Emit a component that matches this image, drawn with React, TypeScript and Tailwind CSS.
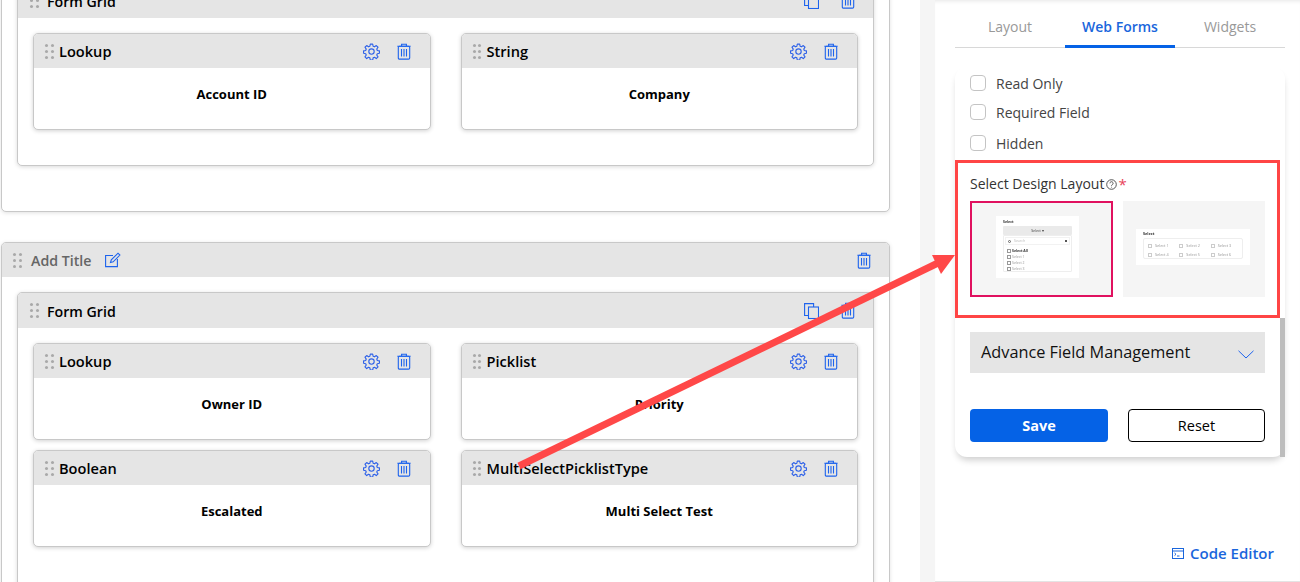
const Grip = () => (
  <span className="grid grid-cols-2 gap-x-[3px] gap-y-[3px] w-[8px] shrink-0">
    {[0, 1, 2, 3, 4, 5].map((i) => (
      <span key={i} className="w-[3px] h-[3px] rounded-full bg-[#a9a9a9]" />
    ))}
  </span>
);

const TrashIcon = () => (
  <svg width="14" height="17" viewBox="0 0 14 17" fill="none" stroke="#1d63ed" strokeWidth="1.1" className="shrink-0">
    <path d="M0.3 3.2h13.4" />
    <path d="M4.6 3V1.2h4.8V3" />
    <rect x="1.3" y="3.2" width="11.4" height="12.9" rx="1.2" />
    <path d="M4.5 6v7.6M7 6v7.6M9.5 6v7.6" />
  </svg>
);

const GearIcon = () => (
  <svg width="17" height="17" viewBox="0 0 24 24" fill="none" stroke="#2f62e8" strokeWidth="1.6" strokeLinejoin="round" className="shrink-0">
    <path d="M10.3 1.5h3.4l.6 3.1 1.9.8 2.6-1.8 2.4 2.4-1.8 2.6.8 1.9 3 .6v3.4l-3 .6-.8 1.9 1.8 2.6-2.4 2.4-2.6-1.8-1.9.8-.6 3h-3.4l-.6-3-1.9-.8-2.6 1.8-2.4-2.4 1.8-2.6-.8-1.9-3-.6v-3.4l3-.6.8-1.9-1.8-2.6 2.4-2.4 2.6 1.8 1.9-.8z" />
    <circle cx="12" cy="12" r="3.8" />
  </svg>
);

const CopyIcon = () => (
  <svg width="15" height="16" viewBox="0 0 15 16" fill="none" stroke="#1d63ed" strokeWidth="1.1" className="shrink-0">
    <path d="M4 12.5H0.6V0.6H9.6V4" />
    <rect x="4.5" y="4" width="10" height="11.5" />
  </svg>
);

const EditIcon = () => (
  <svg width="16" height="16" viewBox="0 0 16 16" fill="none" stroke="#1d63ed" strokeWidth="1.1" className="ml-[14px] shrink-0">
    <path d="M8 3.5H0.6V14.6H12.4V7" />
    <path d="M5.5 10.5l0.8-2.6L13 1.2l1.9 1.9-6.7 6.7z" />
  </svg>
);

const FieldCard = ({ type, label }: { type: string; label: string }) => (
  <div className="h-[97px] rounded-[5px] border border-[#c8c8c8] bg-white shadow-[0_1px_4px_rgba(0,0,0,0.18)] overflow-hidden">
    <div className="h-[34px] bg-[#e5e5e5] flex items-center pl-[11px] pr-[19px]">
      <Grip />
      <span className="ml-[6px] text-[14.6px] font-semibold text-black leading-none">{type}</span>
      <span className="ml-auto flex items-center gap-[17px]">
        <GearIcon />
        <TrashIcon />
      </span>
    </div>
    <div className="pt-[17px] text-center text-[13px] font-bold leading-[19px] text-black">{label}</div>
  </div>
);

const FormGrid = ({ children, height }: { children: React.ReactNode; height: string }) => (
  <div className={`${height} mx-[15px] rounded-[5px] border border-[#c8c8c8] bg-white shadow-[0_1px_4px_rgba(0,0,0,0.15)] overflow-hidden`}>
    <div className="h-[35px] bg-[#e5e5e5] flex items-center pl-[12px] pr-[18px]">
      <Grip />
      <span className="ml-[9px] pt-[3px] text-[14.2px] font-semibold text-black leading-none">Form Grid</span>
      <span className="ml-auto flex items-center gap-[22px]">
        <CopyIcon />
        <TrashIcon />
      </span>
    </div>
    <div className="grid grid-cols-2 gap-x-[30px] gap-y-[10px] pt-[15px] pl-[15px] pr-[15px]">{children}</div>
  </div>
);

const OuterCard = ({ children, height, marginTop }: { children: React.ReactNode; height: string; marginTop: string }) => (
  <div className={`${height} ${marginTop} ml-px w-[889px] rounded-[5px] border border-[#c8c8c8] bg-white shadow-[0_1px_4px_rgba(0,0,0,0.12)] overflow-hidden`}>
    <div className="h-[34px] bg-[#e5e5e5] flex items-center pl-[11px] pr-[18px]">
      <Grip />
      <span className="ml-[10px] pt-[2px] text-[14.2px] font-semibold text-[#666] leading-none">Add Title</span>
      <EditIcon />
      <span className="ml-auto">
        <TrashIcon />
      </span>
    </div>
    <div className="pt-[15px]">{children}</div>
  </div>
);

const Check = ({ label, className }: { label: string; className: string }) => (
  <label className={`flex items-center gap-[10px] text-[14px] leading-none text-[#444] ${className}`}>
    <span className="w-[16px] h-[16px] -mt-[2px] rounded-[4px] border border-[#c4c4c4] bg-white" />
    {label}
  </label>
);

const ThumbA = () => (
  <div className="w-[143px] h-[96px] bg-[#f5f5f5] border-2 border-[#e0115f] pl-[24px] pt-[13px]">
    <div className="w-[83px] h-[62px] bg-white px-[7px] pt-[4px] blur-[0.5px] text-[3.5px] leading-none text-[#999]">
      <div className="font-bold text-[#333]">Select</div>
      <div className="mt-[2.5px] h-[9px] rounded-[1px] bg-[#eaeaea] text-center leading-[9px] text-[#444]">Select ▾</div>
      <div className="h-[37px] rounded-[1px] border border-[#eee] px-[1px]">
        <div className="h-[8px] mt-[1px] flex items-center px-[2px] text-[#bbb] border border-[#f2f2f2]">
          <span className="w-[3px] h-[3px] rounded-full border-[0.7px] border-[#666] mr-[3px]" />
          Search
          <span className="ml-auto w-[2px] h-[2px] bg-[#555]" />
        </div>
        <div className="mt-[4px] ml-[2px] flex flex-col gap-[2.5px]">
          {['Select All', 'Select 1', 'Select 2', 'Select 3'].map((s, i) => (
            <div key={s} className={`flex items-center gap-[1px] ${i === 0 ? 'text-[#333] font-bold' : ''}`}>
              <span className="w-[4px] h-[3.5px] border-[0.5px] border-[#999]" />
              {s}
            </div>
          ))}
        </div>
      </div>
    </div>
  </div>
);

const ThumbB = () => (
  <div className="w-[142px] h-[96px] bg-[#f5f5f5] pl-[13px] pt-[28px]">
    <div className="w-[114px] h-[36px] bg-white px-[7px] pt-[3px] blur-[0.5px] text-[3.8px] leading-none text-[#999]">
      <div className="font-bold text-[#333]">Select</div>
      <div className="mt-[2px] h-[21px] rounded-[2px] border border-[#eee] pl-[4px] pt-[4px] grid grid-cols-3 gap-y-[3.2px]">
        {['Select 1', 'Select 2', 'Select 3', 'Select 4', 'Select 5', 'Select 6'].map((s) => (
          <div key={s} className="flex items-center gap-[3px]">
            <span className="w-[4px] h-[3.5px] border-[0.5px] border-[#ccc]" />
            {s}
          </div>
        ))}
      </div>
    </div>
  </div>
);

const SidePanel = () => (
  <div className="w-[365px] h-[582px] bg-white border-b border-[#e4e4e4] shadow-[inset_0_4px_4px_-3px_rgba(0,0,0,0.1)] pl-[20px] pr-[15px] flex flex-col">
    <div className="h-[48px] border-b border-[#d8d8d8] flex items-end text-[14px]">
      <span className="w-[110px] h-[48px] flex items-center justify-center pt-[6px] text-[#999]">Layout</span>
      <span className="w-[110px] h-[48px] flex items-center justify-center pt-[8px] font-semibold text-[#1a66dc] border-b-[3px] border-[#0562e6] -mb-px">
        Web Forms
      </span>
      <span className="w-[110px] h-[48px] flex items-center justify-center pt-[6px] text-[#999]">Widgets</span>
    </div>
    <div className="mt-[19px] h-[390px] rounded-[12px] bg-white shadow-[0_5px_7px_-2px_rgba(0,0,0,0.2)] flex flex-col relative">
      <div className="pl-[15px] pt-[9px]">
        <Check label="Read Only" className="h-[15px]" />
        <Check label="Required Field" className="h-[15px] mt-[14px]" />
        <Check label="Hidden" className="h-[15px] mt-[16px]" />
      </div>
      <div className="mt-[9px] w-[325px] h-[158px] border-[3px] border-[#ff4545] pl-[12px] pt-[12px]">
        <div className="flex items-center text-[14px] leading-[18px] text-[#333]">
          Select Design Layout
          <svg width="11" height="11" viewBox="0 0 11 11" fill="none" stroke="#444" strokeWidth="0.9" className="ml-[2px]">
            <circle cx="5.5" cy="5.5" r="4.8" />
            <path d="M3.9 4.3a1.6 1.6 0 1 1 2.4 1.4c-.6.3-.8.6-.8 1.1M5.5 7.8v.7" />
          </svg>
          <span className="ml-px text-[#e8425a] text-[15px]">*</span>
        </div>
        <div className="mt-[8px] flex gap-[10px]">
          <ThumbA />
          <ThumbB />
        </div>
      </div>
      <div className="mt-[14px] ml-[15px] w-[295px] h-[41px] bg-[#e5e5e5] flex items-center pl-[11px] pr-[11px] text-[16.3px] text-[#111]">
        <span>Advance Field Management</span>
        <svg width="16" height="9" viewBox="0 0 16 9" fill="none" stroke="#1d63ed" strokeWidth="1" className="ml-auto mt-[3px]">
          <path d="M0.5 0.8L8 8L15.5 0.8" />
        </svg>
      </div>
      <div className="mt-[36px] ml-[15px] w-[295px] flex justify-between">
        <button className="w-[138px] h-[33px] rounded-[4px] bg-[#0562e6] text-white text-[14.5px] font-bold">Save</button>
        <button className="w-[137px] h-[33px] rounded-[4px] border border-black bg-white text-black text-[14.5px]">Reset</button>
      </div>
      <span className="absolute right-0 bottom-0 w-[5px] h-[139px] bg-[#bdbdbd]" />
    </div>
    <div className="mt-auto mb-[20px] flex items-center justify-end pr-[11px] gap-[6px] text-[15px] font-semibold text-[#1a66dc] leading-none">
      <svg width="12" height="11" viewBox="0 0 12 11" fill="none" stroke="#1a66dc" strokeWidth="1">
        <rect x="0.5" y="0.5" width="11" height="10" />
        <path d="M0.5 3h11" />
        <path d="M2.5 5l1.5 1.3L2.5 7.6M5 8h2.5" />
      </svg>
      Code Editor
    </div>
  </div>
);

export default function App() {
  return (
    <div className="relative w-[1300px] h-[582px] overflow-hidden bg-white flex font-['Open_Sans','Noto_Sans',sans-serif]">
      <div className="w-[920px] shrink-0">
        <OuterCard height="h-[280px]" marginTop="-mt-[68px]">
          <FormGrid height="h-[184px]">
            <FieldCard type="Lookup" label="Account ID" />
            <FieldCard type="String" label="Company" />
          </FormGrid>
        </OuterCard>
        <div className="h-[30px]" />
        <OuterCard height="h-[400px]" marginTop="mt-0">
          <FormGrid height="h-[340px]">
            <FieldCard type="Lookup" label="Owner ID" />
            <FieldCard type="Picklist" label="Priority" />
            <FieldCard type="Boolean" label="Escalated" />
            <FieldCard type="MultiSelectPicklistType" label="Multi Select Test" />
          </FormGrid>
        </OuterCard>
      </div>
      <div className="w-[15px] shrink-0 bg-[#f5f5f5]" />
      <SidePanel />
      <svg className="absolute inset-0 pointer-events-none" width="1300" height="582" viewBox="0 0 1300 582">
        <path d="M519 466L938 263" stroke="#ff4848" strokeWidth="7" />
        <path d="M955 255L932 255L941 274Z" fill="#ff4848" />
      </svg>
    </div>
  );
}
